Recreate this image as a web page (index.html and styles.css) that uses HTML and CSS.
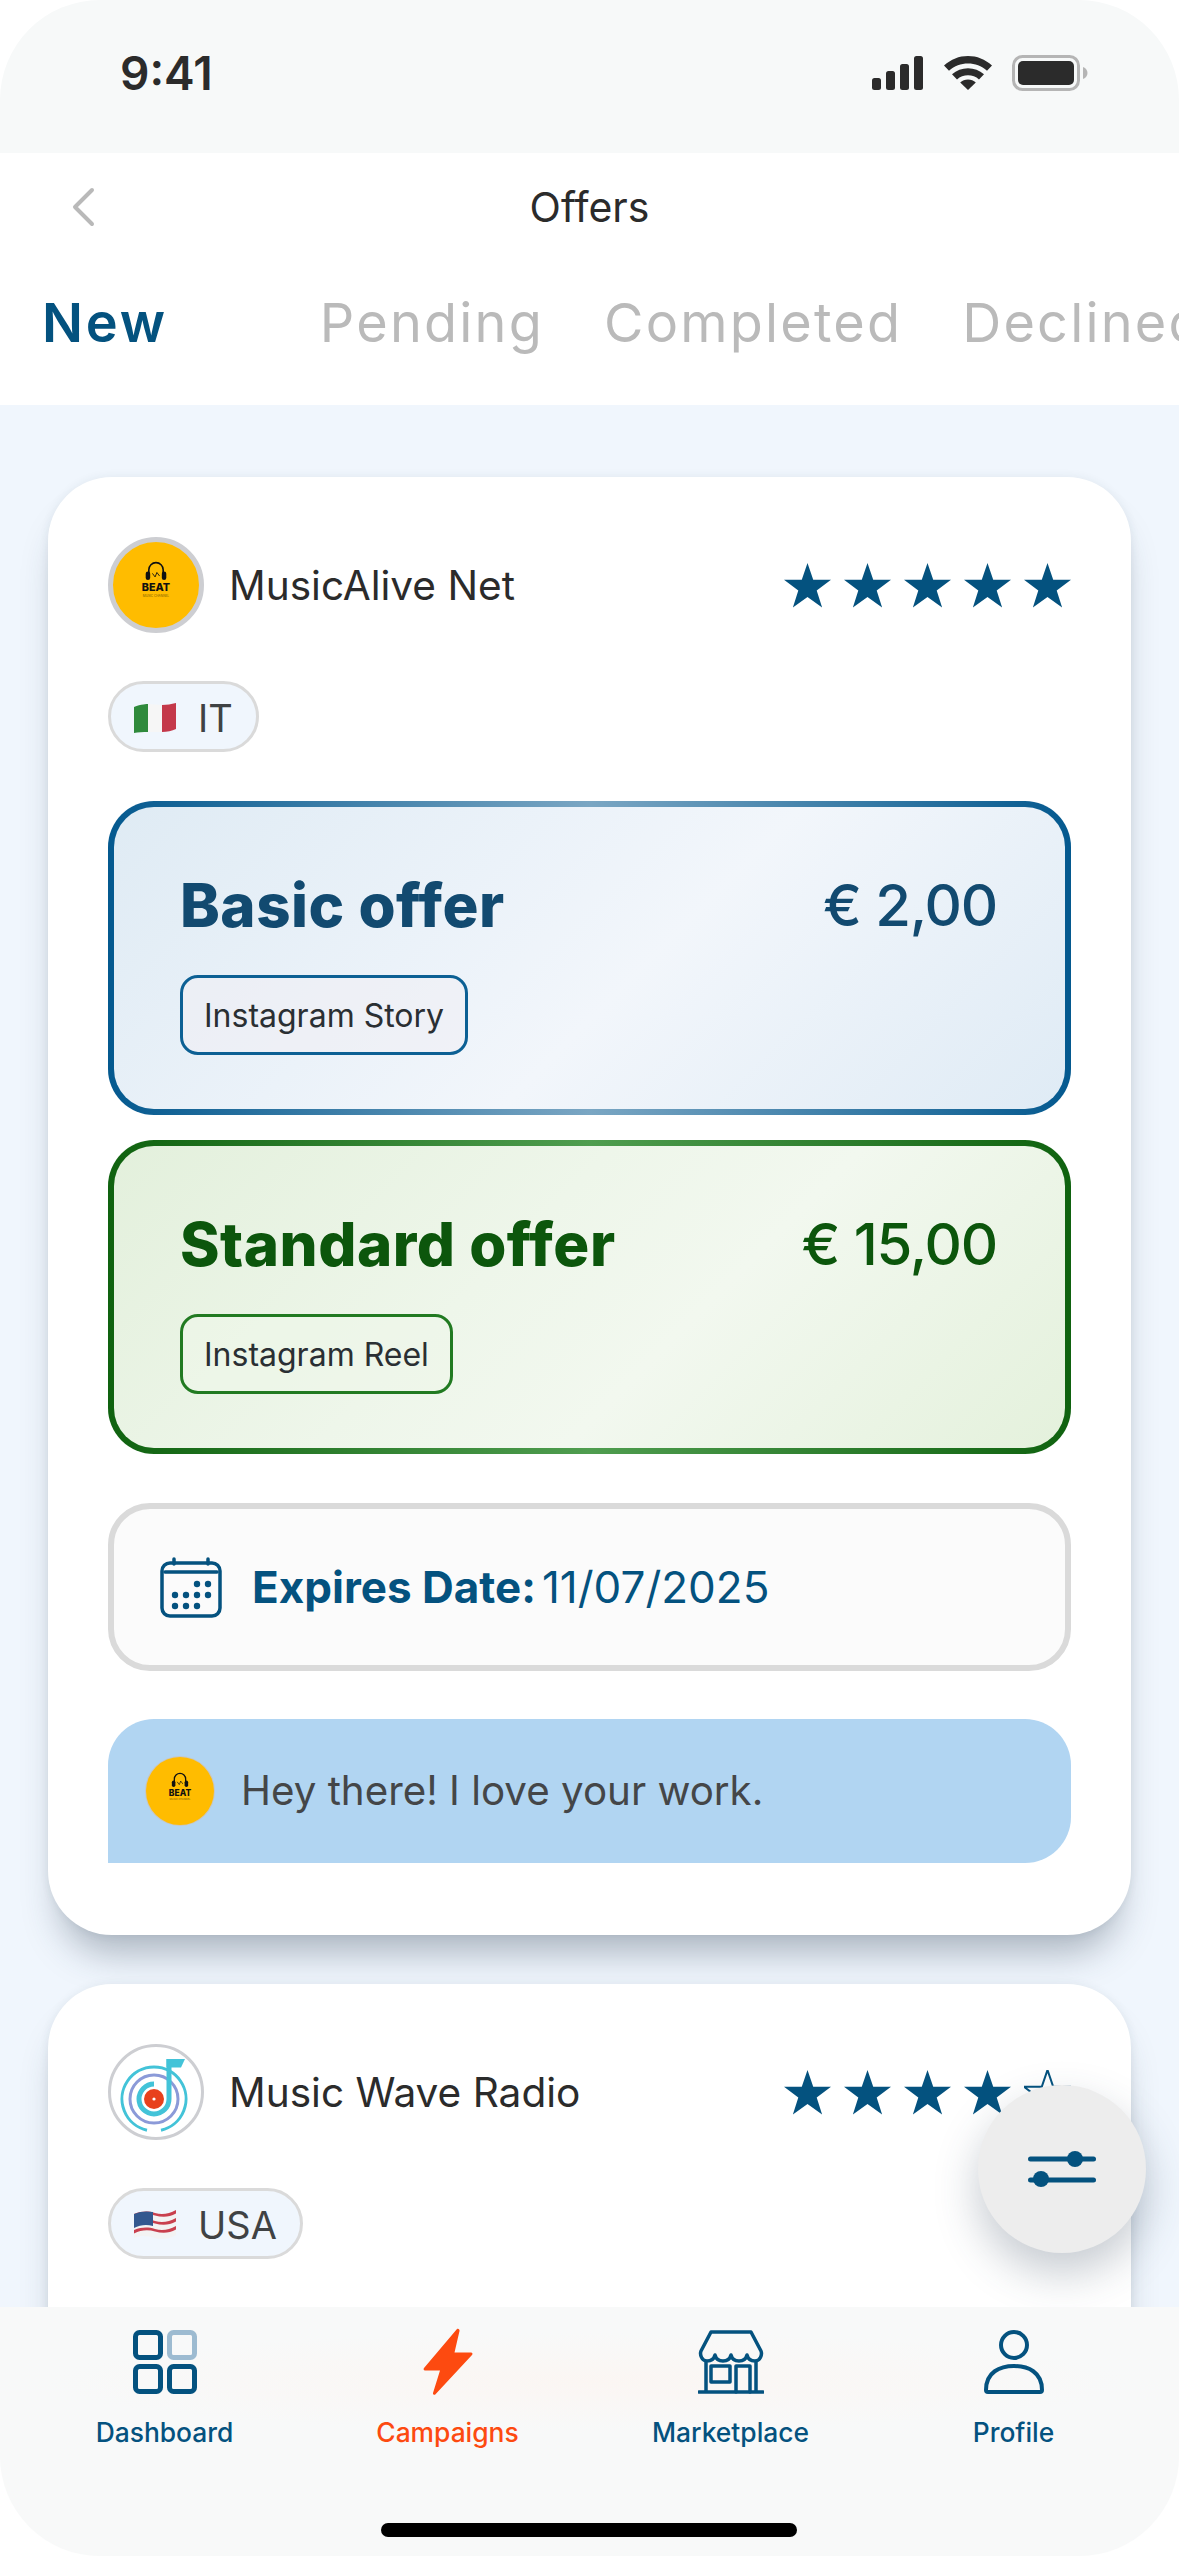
FILE: index.html
```html
<!DOCTYPE html>
<html lang="en">
<head>
<meta charset="utf-8">
<title>Offers</title>
<link rel="stylesheet" href="styles.css">
</head>
<body>
<svg class="defs" width="0" height="0" aria-hidden="true">
  <defs>
    <path id="star" d="M23 0l5.600 16.400H46L32 27l5.300 16.500L23 33.300l-14.300 10.200L14 27 0 16.400h17.400z"/>
    <g id="beat">
      <path d="M40 37v-6a8 8 0 0 1 16 0v6" fill="none" stroke="#111" stroke-width="1.800"/>
      <rect x="36.500" y="33" width="5" height="9.500" rx="2.500" fill="#111"/>
      <rect x="54.500" y="33" width="5" height="9.500" rx="2.500" fill="#111"/>
      <path d="M44 35l3 4 2-5 3 4" fill="none" stroke="#111" stroke-width="1"/>
    </g>
  </defs>
</svg>
<div class="phone">
  <header class="status">
    <span class="clock">9:41</span>
    <div class="status-icons">
      <svg width="52" height="34" viewBox="0 0 52 34" fill="#2b2b2b"><rect x="0" y="22" width="9" height="12" rx="2.500"/><rect x="14" y="15" width="9" height="19" rx="2.500"/><rect x="28" y="8" width="9" height="26" rx="2.500"/><rect x="42" y="0" width="9" height="34" rx="2.500"/></svg>
      <svg width="48" height="34" viewBox="0 0 48 36" preserveAspectRatio="none" fill="#2b2b2b"><path d="M24 0C15 0 7 3.500 0 10l5 5.500C10.500 10.500 17 8 24 8s13.500 2.500 19 7.500l5-5.500C41 3.500 33 0 24 0z"/><path d="M24 13c-6 0-11.500 2.300-16 6.300l5 5.500c3-2.800 7-4.300 11-4.300s8 1.500 11 4.300l5-5.500C35.500 15.300 30 13 24 13z"/><path d="M24 25c-3 0-5.700 1.100-7.800 3L24 36l7.800-8c-2.100-1.900-4.800-3-7.800-3z"/></svg>
      <svg width="76" height="36" viewBox="0 0 76 36"><rect x="1.500" y="1.500" width="65" height="33" rx="9" fill="none" stroke="#b5b5b5" stroke-width="3"/><rect x="6" y="6" width="56" height="24" rx="5" fill="#2b2b2b"/><path d="M71 12c3 1 4.500 3.500 4.500 6s-1.500 5-4.500 6z" fill="#b5b5b5"/></svg>
    </div>
  </header>
  <div class="topbar">
    <div class="title-row">
      <svg class="back" width="24" height="40" viewBox="0 0 24 40"><path d="M21 3L4 20l17 17" fill="none" stroke="#b9b9b9" stroke-width="4" stroke-linecap="round" stroke-linejoin="round"/></svg>
      <h1 class="title">Offers</h1>
    </div>
    <nav class="tabs">
      <span class="tab tab-active">New</span>
      <span class="tab">Pending</span>
      <span class="tab">Completed</span>
      <span class="tab">Declined</span>
    </nav>
  </div>
  <main class="content">
    <article class="card">
      <div class="card-head">
        <div class="brand">
          <div class="avatar avatar-beat">
            <svg viewBox="0 0 96 96" width="86" height="86"><use href="#beat"/><text x="48" y="55" class="logo-big">BEAT</text><text x="48" y="61" class="logo-small">MUSIC CHANNEL</text></svg>
          </div>
          <span class="name">MusicAlive Net</span>
        </div>
        <div class="stars">
          <svg class="star" viewBox="0 0 46 44"><use href="#star"/></svg>
          <svg class="star" viewBox="0 0 46 44"><use href="#star"/></svg>
          <svg class="star" viewBox="0 0 46 44"><use href="#star"/></svg>
          <svg class="star" viewBox="0 0 46 44"><use href="#star"/></svg>
          <svg class="star" viewBox="0 0 46 44"><use href="#star"/></svg>
        </div>
      </div>
      <div class="pill">
        <svg class="flag" viewBox="0 0 44 32"><path d="M1 5c7-3 13-3 14-3v28c-5 0-10 0-14 1z" fill="#2f8a3c"/><path d="M15 2c5 0 9 1 14 1v27c-5 0-9 0-14 0z" fill="#f6f6f6"/><path d="M29 3c5 0 9-1 14-2v26c-4 2-9 3-14 3z" fill="#c4384a"/></svg>
        <span class="pill-text">IT</span>
      </div>
      <section class="offer offer-basic">
        <div class="offer-row">
          <h2 class="offer-name">Basic offer</h2>
          <span class="offer-price">€ 2,00</span>
        </div>
        <span class="tag">Instagram Story</span>
      </section>
      <section class="offer offer-standard">
        <div class="offer-row">
          <h2 class="offer-name">Standard offer</h2>
          <span class="offer-price">€ 15,00</span>
        </div>
        <span class="tag">Instagram Reel</span>
      </section>
      <div class="expires">
        <svg width="62" height="62" viewBox="0 0 62 62" fill="#04527f"><path d="M5 16h52M14 8V3M48 8V3" stroke="#04527f" stroke-width="3.500" stroke-linecap="round" fill="none"/><rect x="2" y="7" width="58" height="53" rx="8" fill="none" stroke="#04527f" stroke-width="3.500"/><circle cx="37" cy="28" r="3.200"/><circle cx="48" cy="28" r="3.200"/><circle cx="15" cy="39" r="3.200"/><circle cx="26" cy="39" r="3.200"/><circle cx="37" cy="39" r="3.200"/><circle cx="48" cy="39" r="3.200"/><circle cx="15" cy="50" r="3.200"/><circle cx="26" cy="50" r="3.200"/><circle cx="37" cy="50" r="3.200"/></svg>
        <p class="expires-text"><strong>Expires Date:</strong><span>11/07/2025</span></p>
      </div>
      <div class="message">
        <div class="avatar-small">
          <svg viewBox="0 0 96 96" width="68" height="68"><use href="#beat"/><text x="48" y="55" class="logo-big">BEAT</text><text x="48" y="61" class="logo-small">MUSIC CHANNEL</text></svg>
        </div>
        <p class="message-text">Hey there! I love your work.</p>
      </div>
    </article>
    <article class="card card-clipped">
      <div class="card-head">
        <div class="brand">
          <div class="avatar avatar-wave">
            <svg viewBox="0 0 90 90" width="90" height="90"><path d="M36 83.200A32 32 0 1 1 50 83.200" fill="none" stroke="#43c3d8" stroke-width="3"/><circle cx="43" cy="52" r="24" fill="none" stroke="#8b9ad8" stroke-width="3"/><circle cx="43" cy="52" r="19.500" fill="#fff"/><path d="M58 12V52A15 15 0 1 1 43 37" fill="none" stroke="#43c3d8" stroke-width="5"/><path d="M55.500 12H74L70 20.500H55.500z" fill="#43c3d8"/><circle cx="43" cy="52" r="10" fill="#e8401c"/><circle cx="43" cy="52" r="1.600" fill="#fff"/></svg>
          </div>
          <span class="name">Music Wave Radio</span>
        </div>
        <div class="stars">
          <svg class="star" viewBox="0 0 46 44"><use href="#star"/></svg>
          <svg class="star" viewBox="0 0 46 44"><use href="#star"/></svg>
          <svg class="star" viewBox="0 0 46 44"><use href="#star"/></svg>
          <svg class="star" viewBox="0 0 46 44"><use href="#star"/></svg>
          <svg class="star star-empty" viewBox="0 0 46 44"><use href="#star"/></svg>
        </div>
      </div>
      <div class="pill">
        <svg class="flag" viewBox="0 0 44 32"><path d="M1 5c8-3 14-3 21-1s14 1 21-3v25c-7 4-14 5-21 3S8 26 1 29z" fill="#f3f3f3"/><path d="M1 5c8-3 14-3 21-1s14 1 21-3v3.500c-7 4-14 4-21 2S8 5 1 8.500zM1 13c8-3 14-3 21-1s14 1 21-3v3.500c-7 4-14 4-21 2S8 13 1 16.500zM1 21c8-3 14-3 21-1s14 1 21-3v3.500c-7 4-14 4-21 2S8 21 1 24.500z" fill="#c9404e"/><path d="M1 5c7-3 13-3 19-2v14C13 15 7 16 1 19z" fill="#33588f"/></svg>
        <span class="pill-text">USA</span>
      </div>
    </article>
    <button class="fab" type="button" aria-label="Filters">
      <svg width="68" height="36" viewBox="0 0 68 36" fill="#04527f"><rect x="0" y="5.500" width="68" height="5" rx="2.500"/><rect x="0" y="26.500" width="68" height="5" rx="2.500"/><circle cx="47" cy="8" r="8"/><circle cx="13" cy="28" r="8"/></svg>
    </button>
  </main>
  <footer class="bottom">
    <nav class="bottom-nav">
      <a class="nav-item">
        <svg width="64" height="64" viewBox="0 0 64 64" fill="none" stroke="#04527f" stroke-width="5"><rect x="2.500" y="2.500" width="25" height="25" rx="4"/><rect x="36.500" y="2.500" width="25" height="25" rx="4" stroke="#9dbbd1"/><rect x="2.500" y="36.500" width="25" height="25" rx="4"/><rect x="36.500" y="36.500" width="25" height="25" rx="4"/></svg>
        <span>Dashboard</span>
      </a>
      <a class="nav-item nav-active">
        <svg width="64" height="68" viewBox="0 0 64 68" fill="#fd4a10"><path d="M41 1L8 40c-.800 1-.300 2.500 1 2.500h15L17 65c-.300 1.500 1.500 2.500 2.500 1.200L56 27c1-1.100.300-2.500-1-2.500H38.500L43.500 3c.400-1.800-1.400-3-2.500-2z"/></svg>
        <span>Campaigns</span>
      </a>
      <a class="nav-item">
        <svg width="66" height="64" viewBox="0 0 66 64" fill="none" stroke="#04527f" stroke-width="3.500" stroke-linecap="round" stroke-linejoin="round"><path d="M13 2h40l10 19c1.500 4-1 10-6 10-4 0-7-2-8-6-1 4-4 6-8 6s-7-2-8-6c-1 4-4 6-8 6s-7-2-8-6c-1 4-4 6-8 6-5 0-7.500-6-6-10zM8 31v31M58 31v31M1 62h64"/><rect x="13" y="36" width="19" height="16"/><path d="M38 62V36h14v26"/></svg>
        <span>Marketplace</span>
      </a>
      <a class="nav-item">
        <svg width="60" height="64" viewBox="0 0 60 64" fill="none" stroke="#04527f" stroke-width="4" stroke-linejoin="round"><circle cx="30" cy="15" r="13"/><path d="M2 60c0-18 14-24 28-24s28 6 28 24c0 1-.500 2-2 2H4c-1.500 0-2-1-2-2z"/></svg>
        <span>Profile</span>
      </a>
    </nav>
    <div class="home-indicator"></div>
  </footer>
</div>
</body>
</html>
```

FILE: styles.css
```css
* { box-sizing: border-box; }
html, body { margin: 0; padding: 0; background: #fff; }
body { font-family: "Inter", "Liberation Sans", sans-serif; color: #2b2b2b; }
.defs { position: absolute; }
.phone { position: relative; width: 1179px; height: 2556px; display: flex; flex-direction: column; overflow: hidden; background: #fff; }

.status { height: 153px; flex: none; background: #f7f9f9; border-radius: 100px 100px 0 0; display: flex; justify-content: space-between; align-items: center; padding: 0 91px 8px 120px; }
.clock { font-size: 46px; font-weight: 600; color: #2b2b2b; line-height: 56px; }
.status-icons { display: flex; align-items: center; gap: 20px; }

.topbar { flex: none; height: 252px; background: #fff; display: flex; flex-direction: column; }
.title-row { position: relative; height: 108px; display: flex; align-items: center; justify-content: center; }
.back { position: absolute; left: 71px; top: 34px; }
.title { margin: 0; font-size: 41px; font-weight: 400; color: #2b2b2b; line-height: 50px; }
.tabs { display: flex; align-items: center; height: 108px; padding: 16px 0 0 42px; white-space: nowrap; gap: 60px; }
.tab { font-size: 54px; font-weight: 400; color: #bababa; line-height: 64px; letter-spacing: 2.200px; }
.tab-active { color: #04527f; font-weight: 600; letter-spacing: 2.800px; margin-right: 92px; }

.content { position: relative; flex: 1; min-height: 0; background: #f0f6fd; padding: 72px 48px 0; display: flex; flex-direction: column; gap: 49px; overflow: hidden; }
.card { flex: none; background: #fff; border-radius: 64px; padding: 60px 60px 72px; box-shadow: 0 30px 36px -12px rgba(40, 60, 80, .34), 0 0 10px rgba(40, 60, 80, .08); display: flex; flex-direction: column; align-items: stretch; }
.card-clipped { min-height: 600px; }
.card-head { display: flex; justify-content: space-between; align-items: center; height: 96px; }
.brand { display: flex; align-items: center; gap: 25px; }
.avatar { width: 96px; height: 96px; border-radius: 50%; border: 5px solid #cdced2; display: flex; align-items: center; justify-content: center; flex: none; overflow: hidden; }
.avatar-beat { background: #ffbc00; }
.avatar-wave { background: #fff; border-width: 3px; }
.logo-big { font-family: "Inter", sans-serif; font-size: 12px; font-weight: 800; text-anchor: middle; fill: #111; }
.logo-small { font-family: "Inter", sans-serif; font-size: 3.500px; text-anchor: middle; fill: #7a5c00; }
.name { font-size: 40.600px; font-weight: 400; color: #2b2b2b; line-height: 50px; padding-top: 2px; }
.stars { display: flex; gap: 13px; }
.star { width: 47px; height: 45px; fill: #04527f; }
.star-empty { fill: #fff; stroke: #04527f; stroke-width: 2; }

.pill { align-self: flex-start; margin-top: 48px; height: 71px; padding: 3px 23px 0 22px; display: flex; align-items: center; gap: 21px; border: 3px solid #dadada; border-radius: 36px; background: #f0f6fd; font-size: 38px; color: #3f4244; }
.flag { width: 44px; height: 32px; flex: none; }

.offer { margin-top: 49px; height: 314px; padding: 63px 68px 0 66px; border: 6px solid transparent; border-radius: 46px; }
.offer + .offer { margin-top: 25px; }
.offer-basic { background: linear-gradient(135deg, #dfebf4 0%, #ebf2f9 35%, #f2f6fb 55%, #dfebf5 100%) padding-box, linear-gradient(90deg, #04598f 0%, #7aa6c3 50%, #04598f 100%) border-box; color: #124a70; }
.offer-standard { background: linear-gradient(135deg, #e3f0dc 0%, #eef6ea 40%, #f2f8ef 60%, #e4f1dc 100%) padding-box, linear-gradient(90deg, #0f620f 0%, #4f9d4f 50%, #0f620f 100%) border-box; color: #0c560c; }
.offer-row { display: flex; justify-content: space-between; align-items: center; height: 70px; }
.offer-name { margin: 0; font-size: 60px; font-weight: 800; line-height: 70px; letter-spacing: .5px; }
.offer-price { font-size: 58px; font-weight: 450; line-height: 70px; letter-spacing: -1.200px; }
.tag { display: inline-flex; align-items: center; height: 80px; margin-top: 35px; padding: 0 21px; border-radius: 18px; border: 3px solid currentColor; background: rgba(240, 238, 244, .55); font-size: 32px; color: #2a2f33; }
.offer-basic .tag { border-color: #0c6094; }
.offer-standard .tag { border-color: #217a21; background: rgba(238, 246, 234, .6); }

.expires { margin-top: 49px; height: 168px; padding: 0 46px; display: flex; align-items: center; gap: 30px; border: 6px solid #dadada; border-radius: 42px; background: #fbfbfb; }
.expires-text { margin: 0; display: flex; gap: 6px; font-size: 44px; color: #04527f; line-height: 54px; }
.expires-text strong { font-weight: 700; }

.message { margin-top: 48px; height: 144px; padding: 0 38px; display: flex; align-items: center; gap: 27px; background: #b1d5f2; border-radius: 46px 46px 46px 0; }
.avatar-small { width: 68px; height: 68px; border-radius: 50%; background: #ffbc00; flex: none; box-shadow: 0 0 0 1px #c8c6c2; display: flex; overflow: hidden; }
.message-text { margin: 0; font-size: 40.300px; color: #444648; line-height: 52px; }

.fab { position: absolute; right: 33px; top: 1680px; width: 168px; height: 168px; border: 0; padding: 0; border-radius: 50%; background: #ededed; box-shadow: 0 20px 44px rgba(50, 70, 90, .28); display: flex; align-items: center; justify-content: center; }

.bottom { flex: none; height: 249px; background: radial-gradient(ellipse 46% 20% at 50% 30%, #fbf6f3, transparent), #f8f9f9; border-radius: 0 0 100px 100px; position: relative; }
.bottom-nav { display: grid; grid-template-columns: repeat(4, 283px); padding: 21px 0 0 23px; }
.nav-item { display: flex; flex-direction: column; align-items: center; gap: 19px; color: #04527f; font-size: 26.400px; font-weight: 500; line-height: 34px; }
.nav-item svg { height: 68px; }
.nav-active { color: #fd4a10; }
.home-indicator { position: absolute; left: 381px; bottom: 19px; width: 416px; height: 14px; border-radius: 7px; background: #000; }
```
